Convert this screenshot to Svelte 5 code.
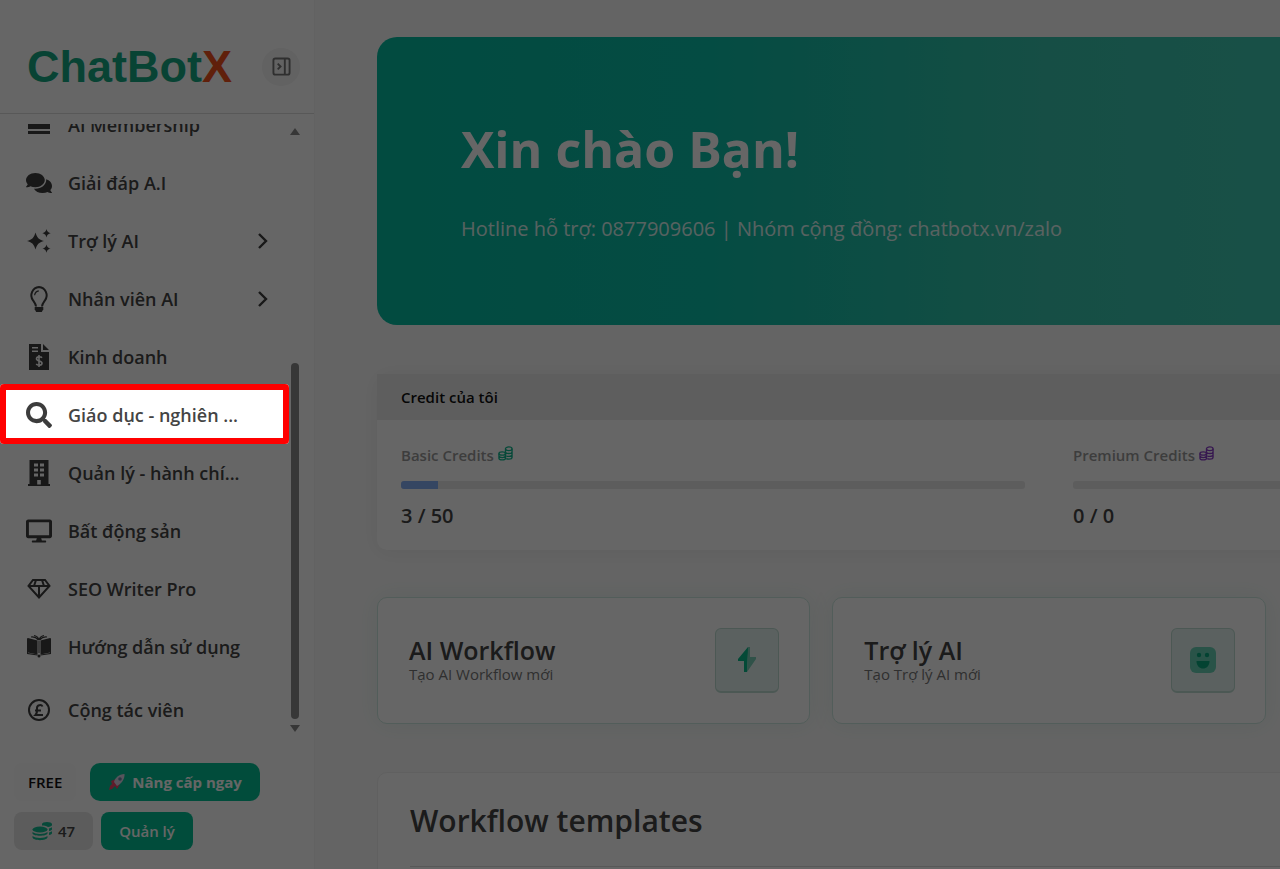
<script>
	const menu = [
		{ icon: 'card', label: 'AI Membership' },
		{ icon: 'comments', label: 'Giải đáp A.I' },
		{ icon: 'sparkles', label: 'Trợ lý AI', children: true },
		{ icon: 'bulb', label: 'Nhân viên AI', children: true },
		{ icon: 'invoice', label: 'Kinh doanh' },
		{ icon: 'search', label: 'Giáo dục - nghiên ...' },
		{ icon: 'building', label: 'Quản lý - hành chí...' },
		{ icon: 'desktop', label: 'Bất động sản' },
		{ icon: 'gem', label: 'SEO Writer Pro' },
		{ icon: 'book', label: 'Hướng dẫn sử dụng' },
		{ icon: 'pound', label: 'Cộng tác viên', spaced: true }
	];

	const credits = [
		{ label: 'Basic Credits', tone: 'green', used: 3, total: 50 },
		{ label: 'Premium Credits', tone: 'purple', used: 0, total: 0 }
	];

	const shortcuts = [
		{ title: 'AI Workflow', text: 'Tạo AI Workflow mới', icon: 'bolt' },
		{ title: 'Trợ lý AI', text: 'Tạo Trợ lý AI mới', icon: 'face' }
	];

	function percent(credit) {
		return credit.total ? (credit.used / credit.total) * 100 : 0;
	}
</script>

{#snippet menuIcon(name)}
	{#if name === 'card'}
		<svg viewBox="0 0 26 26"><path d="M2 4h22v3H2zM2 10h22v7H2zM2 19h22v3H2z" /></svg>
	{:else if name === 'comments'}
		<svg viewBox="0 0 576 512"><path d="M416 192c0-88.4-93.1-160-208-160S0 103.6 0 192c0 34.3 14.1 65.9 38 92-13.4 30.2-35.5 54.2-35.8 54.5-2.2 2.3-2.8 5.7-1.5 8.7S4.8 352 8 352c36.6 0 66.9-12.3 88.7-25 32.2 15.7 70.3 25 111.3 25 114.9 0 208-71.6 208-160zm122 220c23.9-26 38-57.7 38-92 0-66.9-53.5-124.2-129.3-148.1.9 6.6 1.3 13.3 1.3 20.1 0 105.9-107.7 192-240 192-10.8 0-21.3-.8-31.7-1.9C207.8 439.6 281.8 480 368 480c41 0 79.1-9.2 111.3-25 21.8 12.7 52.1 25 88.7 25 3.2 0 6.1-1.9 7.3-4.8 1.3-2.9.7-6.3-1.5-8.7-.3-.3-22.4-24.2-35.8-54.5z" /></svg>
	{:else if name === 'sparkles'}
		<svg viewBox="0 0 26 26">
			<path d="M9.500 4.500c1.500 5.300 3.200 7 8.500 8.500-5.300 1.500-7 3.200-8.500 8.500C8 16.200 6.300 14.500 1 13c5.300-1.500 7-3.200 8.500-8.500Z" />
			<path d="M20.500 1c.8 2.800 1.500 3.400 4.300 4.200-2.800.8-3.500 1.400-4.300 4.200-.8-2.800-1.500-3.400-4.300-4.200 2.800-.8 3.500-1.400 4.300-4.200ZM20.500 16.400c.8 2.800 1.500 3.400 4.300 4.200-2.800.8-3.500 1.400-4.300 4.200-.8-2.800-1.500-3.400-4.300-4.200 2.800-.8 3.500-1.400 4.300-4.200Z" />
		</svg>
	{:else if name === 'bulb'}
		<svg viewBox="0 0 26 26">
			<path class="line" d="M10 20.500c-.3-3-1.600-4.300-3-6.200A8.300 8.300 0 0 1 13 1.100a8.300 8.300 0 0 1 6 13.200c-1.400 1.900-2.700 3.200-3 6.200" />
			<path class="thin" d="M8.600 9.200c.3-2.600 1.700-4 4.200-4.400" />
			<path d="M8.700 21h8.600v2.300L15.800 26h-5.600l-1.500-2.700Z" />
		</svg>
	{:else if name === 'invoice'}
		<svg viewBox="0 0 26 26">
			<path fill-rule="evenodd" d="M3 0h12v8h8v18H3ZM6 3v1.500h6V3ZM6 6.500V8h6V6.500ZM17 0v6h6Z" />
			<path class="cut" d="M16 13.700c-1.200-1.500-5.500-1.300-5.500 1 0 3 5.500 1.600 5.500 4.500 0 2.400-4.400 2.500-5.800.8M13 11v12" />
		</svg>
	{:else if name === 'search'}
		<svg viewBox="0 0 512 512"><path d="M505 442.700L405.300 343c-4.500-4.500-10.600-7-17-7H372c27.600-35.300 44-79.700 44-128C416 93.100 322.900 0 208 0S0 93.100 0 208s93.100 208 208 208c48.300 0 92.700-16.400 128-44v16.300c0 6.400 2.500 12.500 7 17l99.700 99.700c9.400 9.400 24.600 9.400 33.900 0l28.300-28.300c9.400-9.400 9.400-24.600.1-34zM208 336c-70.700 0-128-57.200-128-128 0-70.700 57.200-128 128-128 70.700 0 128 57.200 128 128 0 70.700-57.200 128-128 128z" /></svg>
	{:else if name === 'building'}
		<svg viewBox="0 0 26 26"><path fill-rule="evenodd" d="M3.500 0h19v24H24v2H2v-2h1.500ZM8 3.500v3h4v-3Zm6 0v3h4v-3ZM8 8.500v3h4v-3Zm6 0v3h4v-3Zm-6 5v3h4v-3Zm6 0v3h4v-3ZM11.200 20v4.500h3.600V20Z" /></svg>
	{:else if name === 'desktop'}
		<svg viewBox="0 0 576 512"><path d="M528 0H48C21.500 0 0 21.500 0 48v320c0 26.500 21.500 48 48 48h192l-16 48h-72c-13.300 0-24 10.700-24 24s10.700 24 24 24h272c13.300 0 24-10.700 24-24s-10.700-24-24-24h-72l-16-48h192c26.500 0 48-21.500 48-48V48c0-26.500-21.500-48-48-48zm-16 352H64V64h448v288z" /></svg>
	{:else if name === 'gem'}
		<svg viewBox="0 0 26 26">
			<path class="line" d="M7 4h12l4.500 6L13 21.500 2.500 10ZM2.500 10h21M13 10v11M10 4l-2 6M16 4l2 6" />
		</svg>
	{:else if name === 'book'}
		<svg viewBox="0 0 26 26">
			<path d="M1 4.500l1-.5v15l9.500 1.600v1L1 20ZM25 4.500 24 4v15l-9.500 1.600v1L25 20Z" />
			<path d="M2 4l9.500 2.500v14L2 18.500ZM24 4l-9.500 2.500v14l9.500-2Z" />
			<path d="M5 3c3-.5 5.500.8 7.500 3M8 1.500c2.500.3 4 2 5 4 1-2 2.500-3.700 5-4M21 3c-3-.5-5.500.8-7.500 3" class="thin" />
			<circle cx="13" cy="22" r="1.500" />
			<path d="M12.500 7h1v12h-1z" />
		</svg>
	{:else if name === 'pound'}
		<svg viewBox="0 0 26 26">
			<circle class="line" cx="13" cy="13" r="10" />
			<path class="line" d="M16.500 9.500c-.7-1.800-5.500-2.300-5.500 1.500 0 2.500.8 4.700-1.500 7h7.500M9 13.500h6" />
		</svg>
	{/if}
{/snippet}

{#snippet coins()}
	<svg class="coins" viewBox="0 0 16 16" aria-hidden="true">
		<ellipse cx="11.500" cy="3" rx="3.500" ry="2" />
		<path d="M8 3v9M15 3v9c0 1.300-1.500 2-3.500 2-1 0-2-.2-2.700-.5M8 6c0 1.300 1.500 2 3.500 2S15 7.300 15 6M9 10.900c2.500.6 6 .1 6-1.900" />
		<ellipse cx="4.500" cy="8" rx="3.500" ry="1.800" />
		<path d="M1 8v5c0 2.400 7 2.400 7 0V8M1 10.500c0 2.400 7 2.400 7 0" />
	</svg>
{/snippet}

<div class="app">
	<aside class="sidebar">
		<header class="brand">
			<a href="/" class="logo">ChatBot<span>X</span></a>
			<button type="button" class="collapse" aria-label="Thu gọn menu">
				<svg viewBox="0 0 20 20">
					<rect x="1.500" y="1.500" width="17" height="17" rx="2" />
					<path d="M13.500 2v16M6 7l3 3-3 3" />
				</svg>
			</button>
		</header>

		<div class="menu-area">
			<nav>
				<ul>
					{#each menu as item}
						<li class:spaced={item.spaced}>
							<a href="/">
								<span class="icon" aria-hidden="true">{@render menuIcon(item.icon)}</span>
								<span class="label">{item.label}</span>
								{#if item.children}
									<svg class="chevron" viewBox="0 0 12 18" aria-hidden="true">
										<path d="M2 2l7 7-7 7" />
									</svg>
								{/if}
							</a>
						</li>
					{/each}
				</ul>
			</nav>
			<div class="scrollbar" aria-hidden="true">
				<span class="arrow up"></span>
				<span class="track"><span class="thumb"></span></span>
				<span class="arrow down"></span>
			</div>
		</div>

		<footer class="plan">
			<div class="plan-row">
				<span class="plan-name">FREE</span>
				<button type="button" class="upgrade">
					<svg viewBox="0 0 18 18" aria-hidden="true">
						<path fill="#f0446a" d="M3 8l5-2 4 5-3 5-2-3-3 3-3 1 1-4 2-2Z" />
						<path fill="#d9d3e6" d="M6 9c1-4 5-8 10.500-8C17 6 13 11 9 13Z" />
						<circle cx="12" cy="6" r="1.800" fill="#6d86a8" />
					</svg>
					Nâng cấp ngay
				</button>
			</div>
			<div class="plan-row tight">
				<span class="balance">
					<svg viewBox="0 0 20 20" aria-hidden="true">
						<path d="M10 3c0-2.700 10-2.700 10 0v1c0 1-2 1.800-4 1.900C14 4.800 12 4.500 10 4.500ZM17 7.500c1-.2 2-.5 3-1.200v2c0 .8-1 1.400-3 1.700ZM17 11.500c1-.2 2-.5 3-1.200v2c0 .8-1 1.400-3 1.700Z" />
						<ellipse cx="8" cy="8.500" rx="7.500" ry="3" />
						<path d="M.5 11c3 2.500 12 2.500 15 0v1.500c-1 3-14 3-15 0ZM.5 15c3 2.500 12 2.500 15 0v1.500c-1 3.500-14 3.500-15 0Z" />
					</svg>
					47
				</span>
				<button type="button" class="manage">Quản lý</button>
			</div>
		</footer>
	</aside>

	<main>
		<div class="content">
			<section class="banner">
				<h1>Xin chào Bạn!</h1>
				<p>Hotline hỗ trợ: 0877909606 | Nhóm cộng đồng: chatbotx.vn/zalo</p>
			</section>

			<section class="credits">
				<h2>Credit của tôi</h2>
				<div class="credit-grid">
					{#each credits as credit}
						<div>
							<p class="credit-label {credit.tone}">{credit.label} {@render coins()}</p>
							<div class="bar"><span style="width: {percent(credit)}%"></span></div>
							<p class="credit-value">{credit.used} / {credit.total}</p>
						</div>
					{/each}
				</div>
			</section>

			<section class="shortcuts">
				{#each shortcuts as shortcut}
					<a href="/" class="shortcut">
						<span class="shortcut-text">
							<strong>{shortcut.title}</strong>
							<small>{shortcut.text}</small>
						</span>
						<span class="tile" aria-hidden="true">
							{#if shortcut.icon === 'bolt'}
								<svg viewBox="0 0 28 28">
									<path fill="#08b98a" d="M15 1v6l-1 19h-3V15H5v-2Z" />
									<path fill="#78cdb6" d="M15 1h2v10h6v2l-9 13Z" />
								</svg>
							{:else}
								<svg viewBox="0 0 28 28">
									<rect x="1" y="1" width="26" height="26" rx="6" fill="#68cfb4" />
									<circle cx="10" cy="9" r="2.200" fill="#08a87e" />
									<circle cx="18" cy="9" r="2.200" fill="#08a87e" />
									<path fill="#08a87e" d="M7.500 15h13c0 10-13 10-13 0Z" />
								</svg>
							{/if}
						</span>
					</a>
				{/each}
			</section>

			<section class="templates">
				<h2>Workflow templates</h2>
			</section>
		</div>
	</main>

	<div class="spotlight"></div>
</div>

<style>
	:global(body) {
		overflow: hidden;
		background: #fafafa;
		color: #444444;
		font-family: 'Segoe UI', 'Open Sans', 'Noto Sans', sans-serif;
	}

	.app {
		position: relative;
		display: flex;
		height: 100vh;
		overflow: hidden;
	}

	h1,
	h2,
	p,
	ul {
		margin: 0;
		padding: 0;
	}

	a {
		color: inherit;
		text-decoration: none;
	}

	button {
		border: 0;
		font: inherit;
	}

	.sidebar {
		flex: none;
		display: flex;
		flex-direction: column;
		box-sizing: border-box;
		width: 315px;
		border-right: 1px solid #f4f4f4;
		background: #ffffff;
	}

	.brand {
		display: flex;
		align-items: center;
		justify-content: space-between;
		box-sizing: border-box;
		height: 114px;
		padding: 20px 14px 0 27px;
		border-bottom: 1px solid #dddddd;
	}

	.logo {
		color: #16a882;
		font-family: 'Liberation Sans', Arial, sans-serif;
		font-size: 45px;
		font-weight: 700;
	}

	.logo span {
		color: #f0501c;
	}

	.collapse {
		display: grid;
		place-items: center;
		width: 38px;
		height: 38px;
		border-radius: 50%;
		background: #f4f4f4;
	}

	.collapse svg {
		width: 19px;
		height: 19px;
		fill: none;
		stroke: #777777;
		stroke-width: 2;
	}

	.menu-area {
		flex: 1;
		display: flex;
		min-height: 0;
		margin-top: 10px;
	}

	nav {
		flex: 1;
		min-width: 0;
		overflow: hidden;
	}

	ul {
		margin-top: -28px;
		list-style: none;
	}

	li.spaced {
		margin-top: 5px;
	}

	li a {
		display: flex;
		align-items: center;
		gap: 16px;
		height: 58px;
		padding: 0 22px 0 26px;
		font-size: 18px;
		font-weight: 600;
		white-space: nowrap;
	}

	.label {
		flex: 1;
	}

	.icon {
		display: flex;
	}

	.icon svg {
		width: 26px;
		height: 26px;
		fill: #3c3c3c;
	}

	.icon .line,
	.icon .thin {
		fill: none;
		stroke: #3c3c3c;
		stroke-width: 2;
	}

	.icon .thin {
		stroke-width: 1.2;
	}

	.icon .cut {
		fill: none;
		stroke: #ffffff;
		stroke-width: 1.6;
	}

	.chevron {
		width: 12px;
		height: 18px;
		fill: none;
		stroke: #3c3c3c;
		stroke-width: 2.4;
	}

	.scrollbar {
		display: flex;
		flex-direction: column;
		align-items: center;
		width: 8px;
		margin-right: 15px;
		padding: 4px 0 7px;
	}

	.arrow {
		border: 5px solid transparent;
	}

	.arrow.up {
		border-top-width: 0;
		border-bottom: 7px solid #8b8b8b;
	}

	.arrow.down {
		border-bottom-width: 0;
		border-top: 7px solid #8b8b8b;
	}

	.track {
		flex: 1;
		display: flex;
		align-items: flex-end;
		width: 100%;
		margin-bottom: 6px;
	}

	.thumb {
		width: 100%;
		height: 61%;
		border-radius: 4px;
		background: #8b8b8b;
	}

	.plan {
		display: grid;
		gap: 11px;
		padding: 24px 14px 19px;
	}

	.plan-row {
		display: flex;
		gap: 14px;
		height: 38px;
	}

	.plan-row.tight {
		gap: 8px;
	}

	.plan-row > * {
		display: flex;
		align-items: center;
		justify-content: center;
		gap: 6px;
		box-sizing: border-box;
		padding: 0 18px;
		border-radius: 8px;
		font-size: 15px;
		font-weight: 600;
		white-space: nowrap;
	}

	.plan-row .plan-name {
		padding: 0 14px;
		background: #fcfcfc;
		color: #111111;
	}

	.plan-row .upgrade {
		border-radius: 10px;
		background: #04bf94;
		color: #ffffff;
		font-weight: 700;
	}

	.upgrade svg {
		width: 18px;
		height: 18px;
	}

	.balance {
		background: #e6e6e6;
	}

	.balance svg {
		width: 20px;
		height: 20px;
		fill: #12b78f;
	}

	.plan-row .manage {
		background: #04bf94;
		color: #ffffff;
	}

	main {
		flex: 1;
		min-width: 0;
		overflow: hidden;
		padding: 37px 62px 0;
	}

	.content {
		min-width: 1344px;
	}

	.banner {
		display: flex;
		flex-direction: column;
		justify-content: center;
		gap: 32px;
		box-sizing: border-box;
		height: 288px;
		padding: 0 84px 4px;
		border-radius: 20px;
		background: linear-gradient(90deg, #05bba0 0%, #0cbda8 25%, #38c4ac 50%, #48cfbd 100%);
		color: #ffffff;
	}

	h1 {
		font-size: 50px;
		font-weight: 700;
		line-height: 68px;
	}

	.banner p {
		font-size: 20px;
		line-height: 28px;
		opacity: 0.85;
	}

	.credits {
		margin-top: 49px;
		border-radius: 10px;
		background: #ffffff;
		box-shadow: 0 2px 20px rgba(0, 0, 0, 0.06);
	}

	.credits h2 {
		padding: 0 24px;
		background: #ececec;
		color: #111111;
		font-size: 15px;
		font-weight: 600;
		line-height: 46px;
	}

	.credit-grid {
		display: grid;
		grid-template-columns: 1fr 1fr;
		gap: 48px;
		padding: 24px 24px 21px;
	}

	.credit-label {
		color: #999999;
		font-size: 15px;
		font-weight: 600;
		line-height: 22px;
	}

	.coins {
		width: 15px;
		height: 15px;
		fill: none;
		stroke: #12b78f;
		stroke-width: 1.4;
	}

	.purple .coins {
		stroke: #8a3ec8;
	}

	.bar {
		display: flex;
		height: 8px;
		margin: 15px 0 13px;
		overflow: hidden;
		border-radius: 3px;
		background: #e8e8e8;
	}

	.bar span {
		background: #86b0f4;
	}

	.credit-value {
		font-size: 20px;
		font-weight: 600;
		line-height: 27px;
	}

	.shortcuts {
		display: grid;
		grid-template-columns: repeat(3, 1fr);
		gap: 22px;
		margin-top: 47px;
	}

	.shortcut {
		display: flex;
		align-items: center;
		justify-content: space-between;
		padding: 30px 30px 30px 31px;
		border: 1px solid #cde8e0;
		border-radius: 10px;
		background: #ffffff;
		box-shadow: 0 0 24px rgba(20, 160, 120, 0.08);
	}

	.shortcut-text {
		display: grid;
	}

	strong {
		font-size: 25px;
		font-weight: 600;
		line-height: 27px;
	}

	small {
		color: #777777;
		font-size: 15px;
		line-height: 20px;
	}

	.tile {
		display: grid;
		place-items: center;
		width: 62px;
		height: 62px;
		border: 1px solid #bddcd2;
		border-bottom-width: 2px;
		border-radius: 6px;
		background: #e4f3ef;
	}

	.tile svg {
		width: 28px;
		height: 28px;
	}

	.templates {
		min-height: 300px;
		margin-top: 48px;
		padding: 25px 32px 0;
		border: 1px solid #f1f1f1;
		border-radius: 10px;
		background: #ffffff;
	}

	.templates h2 {
		padding-bottom: 22px;
		border-bottom: 1px solid #dddddd;
		font-size: 30px;
		font-weight: 600;
		line-height: 46px;
	}

	/* Tour step: everything outside the frame is dimmed */
	.spotlight {
		position: absolute;
		top: 384px;
		left: 0;
		box-sizing: border-box;
		width: 289px;
		height: 60px;
		border: 6px solid #ff0000;
		border-radius: 4px;
		box-shadow: 0 0 0 200vmax rgba(0, 0, 0, 0.6);
		pointer-events: none;
	}
</style>
